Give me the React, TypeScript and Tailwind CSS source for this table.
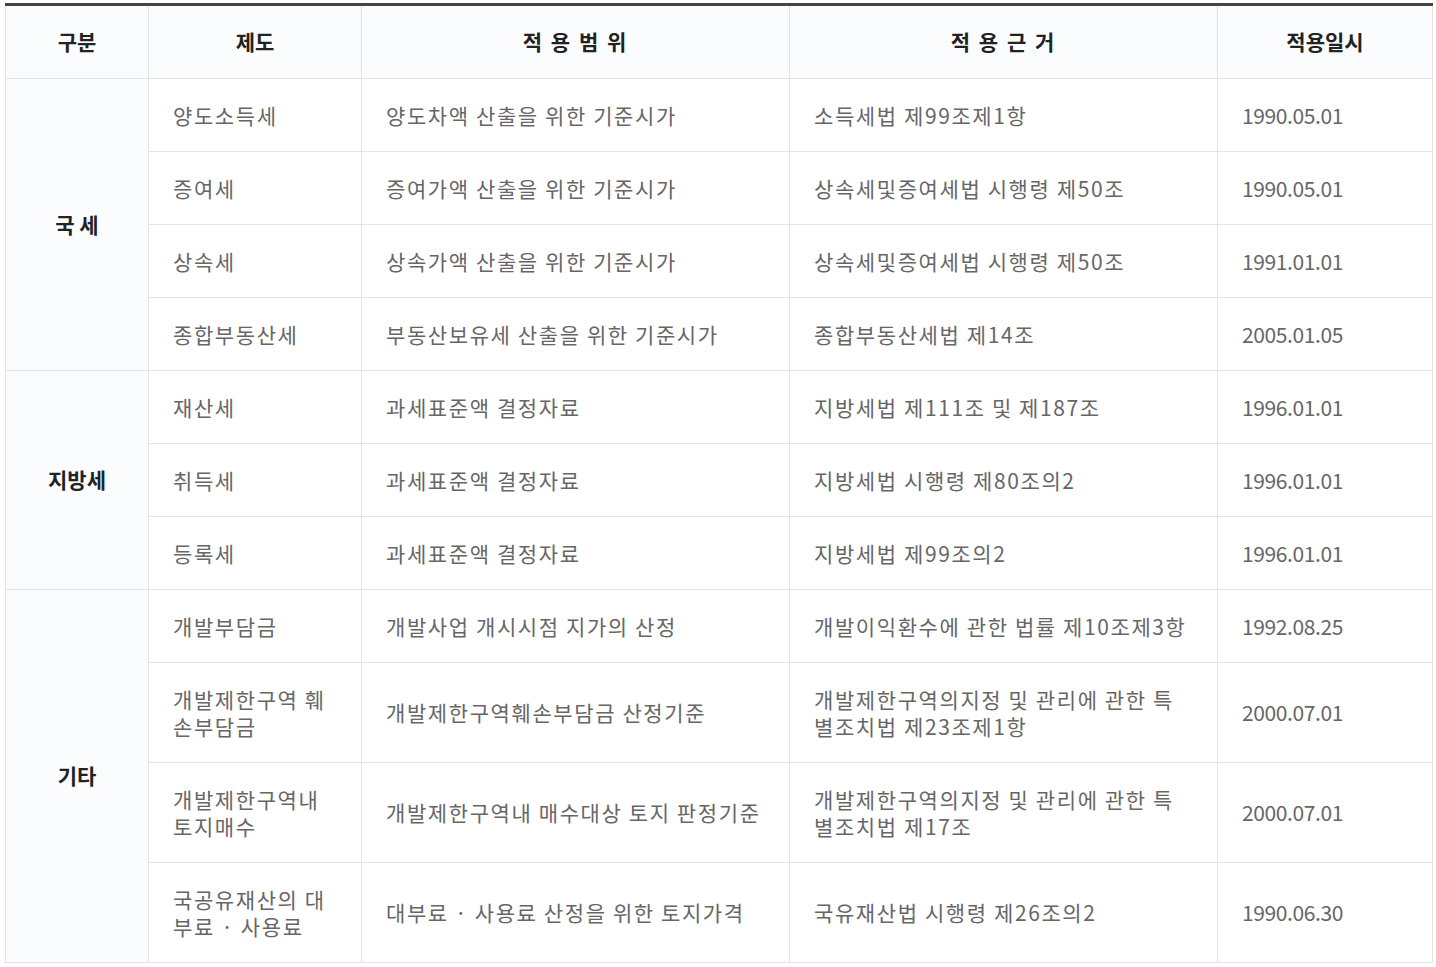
const font = { fontFamily: '"Noto Sans CJK KR", "Noto Sans", sans-serif' };

type Row = { name: React.ReactNode; scope: React.ReactNode; basis: React.ReactNode; date: string; tall?: boolean };

const groups: { label: string; rows: Row[] }[] = [
  {
    label: '국 세',
    rows: [
      { name: '양도소득세', scope: '양도차액 산출을 위한 기준시가', basis: '소득세법 제99조제1항', date: '1990.05.01' },
      { name: '증여세', scope: '증여가액 산출을 위한 기준시가', basis: '상속세및증여세법 시행령 제50조', date: '1990.05.01' },
      { name: '상속세', scope: '상속가액 산출을 위한 기준시가', basis: '상속세및증여세법 시행령 제50조', date: '1991.01.01' },
      { name: '종합부동산세', scope: '부동산보유세 산출을 위한 기준시가', basis: '종합부동산세법 제14조', date: '2005.01.05' },
    ],
  },
  {
    label: '지방세',
    rows: [
      { name: '재산세', scope: '과세표준액 결정자료', basis: '지방세법 제111조 및 제187조', date: '1996.01.01' },
      { name: '취득세', scope: '과세표준액 결정자료', basis: '지방세법 시행령 제80조의2', date: '1996.01.01' },
      { name: '등록세', scope: '과세표준액 결정자료', basis: '지방세법 제99조의2', date: '1996.01.01' },
    ],
  },
  {
    label: '기타',
    rows: [
      { name: '개발부담금', scope: '개발사업 개시시점 지가의 산정', basis: '개발이익환수에 관한 법률 제10조제3항', date: '1992.08.25' },
      {
        name: <>개발제한구역 훼<br />손부담금</>,
        scope: '개발제한구역훼손부담금 산정기준',
        basis: <>개발제한구역의지정 및 관리에 관한 특<br />별조치법 제23조제1항</>,
        date: '2000.07.01',
        tall: true,
      },
      {
        name: <>개발제한구역내<br />토지매수</>,
        scope: '개발제한구역내 매수대상 토지 판정기준',
        basis: <>개발제한구역의지정 및 관리에 관한 특<br />별조치법 제17조</>,
        date: '2000.07.01',
        tall: true,
      },
      {
        name: <>국공유재산의 대<br />부료 · 사용료</>,
        scope: '대부료 · 사용료 산정을 위한 토지가격',
        basis: '국유재산법 시행령 제26조의2',
        date: '1990.06.30',
        tall: true,
      },
    ],
  },
];

const th = 'border border-[#e3e3e3] bg-[#fbfcfe] h-[74px] text-[21px] font-bold text-[#222] text-center';
const cell = 'border border-[#e3e3e3] pl-[24px] pr-[10px] text-[21px] leading-[27px] text-[#666] whitespace-nowrap';
const td = cell + ' tracking-[1.6px]';
const tdDate = cell + ' tracking-[-0.4px]';

export default function App() {
  return (
    <div className="bg-white pt-[3px] pl-[5px] min-h-[967px]" style={font}>
      <table className="table-fixed border-collapse w-[1427px] border-t-[3px] border-t-[#444]">
        <colgroup>
          <col className="w-[143px]" />
          <col className="w-[213px]" />
          <col className="w-[428px]" />
          <col className="w-[428px]" />
          <col className="w-[215px]" />
        </colgroup>
        <thead>
          <tr>
            <th className={th}>구분</th>
            <th className={th}>제도</th>
            <th className={th + ' tracking-[2px]'}>적 용 범 위</th>
            <th className={th + ' tracking-[2px]'}>적 용 근 거</th>
            <th className={th}>적용일시</th>
          </tr>
        </thead>
        <tbody>
          {groups.map(g =>
            g.rows.map((r, i) => (
              <tr key={g.label + i} className={r.tall ? 'h-[100px]' : 'h-[73px]'}>
                {i === 0 && (
                  <td rowSpan={g.rows.length} className="border border-[#e3e3e3] bg-[#fbfcfe] text-center text-[21px] font-bold text-[#222]">
                    {g.label}
                  </td>
                )}
                <td className={td}>{r.name}</td>
                <td className={td}>{r.scope}</td>
                <td className={td}>{r.basis}</td>
                <td className={tdDate}>{r.date}</td>
              </tr>
            ))
          )}
        </tbody>
      </table>
    </div>
  );
}
